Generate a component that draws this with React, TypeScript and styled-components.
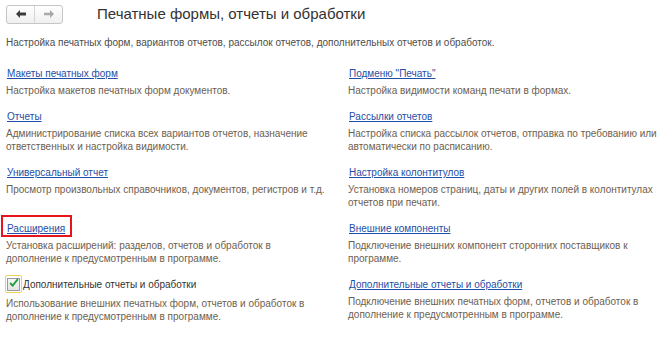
import * as React from 'react';
import styled, { createGlobalStyle } from 'styled-components';

const GlobalStyle = createGlobalStyle`
	html, body {
		margin: 0;
		padding: 0;
		background: #fff;
	}
	body {
		font-family: 'Liberation Sans', Arial, sans-serif;
	}
`;

const Page = styled.div`
	width: 661px;
	height: 338px;
	overflow: hidden;
	background: #fff;
`;

const Header = styled.div`
	align-items: center;
	display: flex;
	padding: 4px 0 0 6px;
	height: 20px;
`;

const NavGroup = styled.div`
	border: 1px solid #c6c6c6;
	border-radius: 3px;
	background: linear-gradient(#ffffff, #f0f0f0);
	display: flex;
	height: 17px;
	width: 55px;
`;

const NavButton = styled.div<{ $divider?: boolean }>`
	align-items: center;
	display: flex;
	flex: 1;
	justify-content: center;
	border-right: ${(p) => (p.$divider ? '1px solid #d6d6d6' : 'none')};
`;

const Title = styled.h1`
	color: #333;
	font-size: 15px;
	font-weight: 400;
	line-height: 20px;
	margin: 0 0 0 34px;
`;

const Subtitle = styled.div`
	color: #4d4d4d;
	font-size: 10px;
	line-height: 13px;
	margin: 12px 0 0 6px;
	white-space: nowrap;
`;

const Columns = styled.div`
	display: grid;
	grid-template-columns: 342px 1fr;
	row-gap: 10px;
	padding: 15px 0 0 6px;
`;

const Item = styled.div`
	display: flex;
	flex-direction: column;
`;

const LinkLine = styled.div`
	height: 16px;
	line-height: 16px;
	margin-left: 1px;
`;

const Link = styled.a`
	color: #1f4ea6;
	font-size: 10px;
	text-decoration: underline;
	cursor: pointer;
`;

const Highlight = styled.span`
	position: relative;
	&::after {
		content: '';
		position: absolute;
		left: -6px;
		right: -7px;
		top: -3px;
		bottom: -2px;
		border: 2px solid #e8141c;
		pointer-events: none;
	}
`;

const Description = styled.div`
	color: #6e604f;
	font-size: 10px;
	line-height: 13px;
	margin-top: 4px;
	white-space: nowrap;
`;

const CheckRow = styled.label`
	align-items: center;
	display: flex;
	height: 18px;
	margin-left: -1px;
`;

const CheckFrame = styled.span`
	align-items: center;
	border: 1px solid #f2cf5c;
	border-radius: 2px;
	box-sizing: border-box;
	display: flex;
	height: 18px;
	justify-content: center;
	width: 17px;
`;

const CheckBox = styled.span`
	align-items: center;
	background: linear-gradient(#f6f6f6, #e4e4e4);
	border: 1px solid #9a9a9a;
	box-sizing: border-box;
	display: flex;
	height: 13px;
	justify-content: center;
	width: 13px;
`;

const CheckLabel = styled.span`
	color: #333;
	font-size: 10px;
	margin-left: 1px;
`;

function ArrowLeft({ color }: { color: string }) {
	return (
		<svg width="10" height="8" viewBox="0 0 10 8">
			<path d="M0 4 L4 0 L4 2.6 L10 2.6 L10 5.4 L4 5.4 L4 8 Z" fill={color} />
		</svg>
	);
}

function ArrowRight({ color }: { color: string }) {
	return (
		<svg width="10" height="8" viewBox="0 0 10 8">
			<path d="M10 4 L6 0 L6 2.8 L0 2.8 L0 5.2 L6 5.2 L6 8 Z" fill={color} />
		</svg>
	);
}

function CheckMark() {
	return (
		<svg width="13" height="12" viewBox="0 0 13 12" style={{ marginTop: -3, marginLeft: 1 }}>
			<path d="M1.5 6 L4.8 9.5 L11.5 1" fill="none" stroke="#1e9e3a" strokeWidth="2.4" />
		</svg>
	);
}

type Entry = {
	title: string;
	lines: string[];
	highlight?: boolean;
	checkbox?: boolean;
};

const left: Entry[] = [
	{ title: 'Макеты печатных форм', lines: ['Настройка макетов печатных форм документов.'] },
	{
		title: 'Отчеты',
		lines: [
			'Администрирование списка всех вариантов отчетов, назначение',
			'ответственных и настройка видимости.',
		],
	},
	{
		title: 'Универсальный отчет',
		lines: ['Просмотр произвольных справочников, документов, регистров и т.д.'],
	},
	{
		title: 'Расширения',
		highlight: true,
		lines: [
			'Установка расширений: разделов, отчетов и обработок в',
			'дополнение к предусмотренным в программе.',
		],
	},
	{
		title: 'Дополнительные отчеты и обработки',
		checkbox: true,
		lines: [
			'Использование внешних печатных форм, отчетов и обработок в',
			'дополнение к предусмотренным в программе.',
		],
	},
];

const right: Entry[] = [
	{ title: 'Подменю "Печать"', lines: ['Настройка видимости команд печати в формах.'] },
	{
		title: 'Рассылки отчетов',
		lines: [
			'Настройка списка рассылок отчетов, отправка по требованию или',
			'автоматически по расписанию.',
		],
	},
	{
		title: 'Настройка колонтитулов',
		lines: [
			'Установка номеров страниц, даты и других полей в колонтитулах',
			'отчетов при печати.',
		],
	},
	{
		title: 'Внешние компоненты',
		lines: ['Подключение внешних компонент сторонних поставщиков к', 'программе.'],
	},
	{
		title: 'Дополнительные отчеты и обработки',
		lines: [
			'Подключение внешних печатных форм, отчетов и обработок в',
			'дополнение к предусмотренным в программе.',
		],
	},
];

function EntryBlock({ entry }: { entry: Entry }) {
	let head: React.ReactNode;
	if (entry.checkbox) {
		head = (
			<CheckRow>
				<CheckFrame>
					<CheckBox>
						<CheckMark />
					</CheckBox>
				</CheckFrame>
				<CheckLabel>{entry.title}</CheckLabel>
			</CheckRow>
		);
	} else if (entry.highlight) {
		head = (
			<LinkLine>
				<Highlight>
					<Link>{entry.title}</Link>
				</Highlight>
			</LinkLine>
		);
	} else {
		head = (
			<LinkLine>
				<Link>{entry.title}</Link>
			</LinkLine>
		);
	}
	return (
		<Item>
			{head}
			<Description>
				{entry.lines.map((l, i) => (
					<div key={i}>{l}</div>
				))}
			</Description>
		</Item>
	);
}

export default function App() {
	const rows = left.map((l, i) => [l, right[i]]);
	return (
		<Page>
			<GlobalStyle />
			<Header>
				<NavGroup>
					<NavButton $divider>
						<ArrowLeft color="#3c3c3c" />
					</NavButton>
					<NavButton>
						<ArrowRight color="#a8a8a8" />
					</NavButton>
				</NavGroup>
				<Title>Печатные формы, отчеты и обработки</Title>
			</Header>
			<Subtitle>
				Настройка печатных форм, вариантов отчетов, рассылок отчетов, дополнительных отчетов и обработок.
			</Subtitle>
			<Columns>
				{rows.map(([l, r], i) => (
					<React.Fragment key={i}>
						<EntryBlock entry={l} />
						<EntryBlock entry={r} />
					</React.Fragment>
				))}
			</Columns>
		</Page>
	);
}
